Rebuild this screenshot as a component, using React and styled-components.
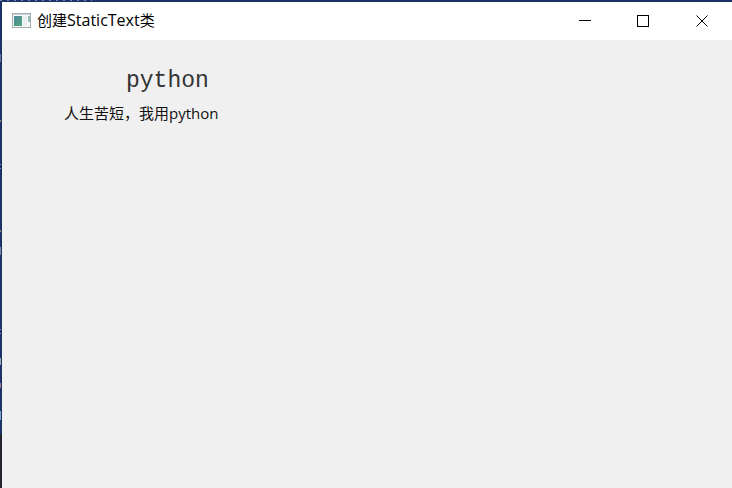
import React from "react";
import styled, { createGlobalStyle } from "styled-components";

const GlobalStyle = createGlobalStyle`
  * { box-sizing: border-box; }
  body {
    margin: 0;
    font-family: "Open Sans", "Noto Sans CJK SC", sans-serif;
    font-size: 15px;
    color: #000;
  }
`;

const fleck = (color, y, height) =>
  `linear-gradient(${color}, ${color}) 0 ${y}px / 1px ${height}px no-repeat`;

const Desktop = styled.div`
  min-height: 100vh;
  display: flex;
  padding: 2px 0 0 2px;
  background:
    ${fleck("#68758c", 54, 8)},
    ${fleck("#8a8166", 120, 2)},
    ${fleck("#8c94a4", 164, 1)},
    ${fleck("#8c94a4", 168, 1)},
    ${fleck("#8a8166", 230, 2)},
    ${fleck("#808a99", 247, 8)},
    ${fleck("#8c94a4", 329, 1)},
    ${fleck("#8c94a4", 333, 1)},
    ${fleck("#9aa5af", 358, 7)},
    ${fleck("#a47c85", 383, 5)},
    ${fleck("#7ba5bd", 411, 9)},
    repeating-linear-gradient(90deg, #7385a8 0 2px, #1b3268 2px 7px) 0 0 / 92px 1px no-repeat,
    linear-gradient(#1b3268 0 434px, #24242c 434px);
`;

const Window = styled.main`
  flex: 1;
  display: flex;
  flex-direction: column;
  background: #f0f0f0;
`;

const TitleBar = styled.header`
  height: 38px;
  display: flex;
  align-items: center;
  padding-left: 10px;
  background: #fff;
`;

const AppIcon = styled.svg`
  width: 20px;
  height: 16px;
  margin-right: 5px;
  flex: none;
`;

const Title = styled.h1`
  flex: 1;
  margin: 0;
  padding-bottom: 2px;
  font-size: 15px;
  line-height: 20px;
  font-weight: 400;
`;

const ClassName = styled.span`
  font-size: 16px;
`;

const Controls = styled.div`
  display: flex;
  align-self: stretch;
`;

const ControlButton = styled.button`
  width: ${({ $wide }) => ($wide ? 60 : 58)}px;
  padding: 0;
  border: 0;
  background: transparent;
  display: grid;
  place-items: center;
  &:hover { background: #e5e5e5; }
`;

const Glyph = styled.svg`
  width: 12px;
  height: 12px;
  fill: none;
  stroke: #000;
`;

const Panel = styled.section`
  flex: 1;
  padding: 24px 62px;
`;

const Heading = styled.p`
  margin: 0 0 0 62px;
  font-family: "Liberation Mono", monospace;
  font-size: 23px;
  line-height: 34px;
  color: #333;
`;

const Caption = styled.p`
  margin: 4px 0 0;
  line-height: 22px;
  color: #111;
`;

export default function App() {
  return (
    <>
      <GlobalStyle />
      <Desktop>
        <Window>
          <TitleBar>
            <AppIcon viewBox="0 0 20 16" aria-hidden="true">
              <defs>
                <linearGradient id="pane" x1="0" y1="0" x2="1" y2="1">
                  <stop offset="0" stopColor="#5185a0" />
                  <stop offset="1" stopColor="#4fa777" />
                </linearGradient>
              </defs>
              <rect x="0.5" y="0.5" width="18" height="14" fill="#f7f8f8" stroke="#a6adb3" />
              <path d="M1 1.5H18" stroke="#cbd2d8" />
              <rect x="2" y="3" width="8" height="10" fill="url(#pane)" />
              <rect x="11" y="3" width="4" height="10" fill="#e9eeee" />
              <rect x="16" y="3" width="2" height="6" fill="url(#pane)" opacity="0.6" />
            </AppIcon>
            <Title>创建<ClassName>StaticText</ClassName>类</Title>
            <Controls>
              <ControlButton type="button" aria-label="Minimize">
                <Glyph viewBox="0 0 12 12"><path d="M0 5.5H12" /></Glyph>
              </ControlButton>
              <ControlButton type="button" aria-label="Maximize">
                <Glyph viewBox="0 0 12 12"><rect x="0.5" y="0.5" width="11" height="11" /></Glyph>
              </ControlButton>
              <ControlButton type="button" aria-label="Close" $wide>
                <Glyph viewBox="0 0 12 12"><path d="M0.5 0.5L11.5 11.5M11.5 0.5L0.5 11.5" /></Glyph>
              </ControlButton>
            </Controls>
          </TitleBar>
          <Panel>
            <Heading>python</Heading>
            <Caption>人生苦短，我用python</Caption>
          </Panel>
        </Window>
      </Desktop>
    </>
  );
}
